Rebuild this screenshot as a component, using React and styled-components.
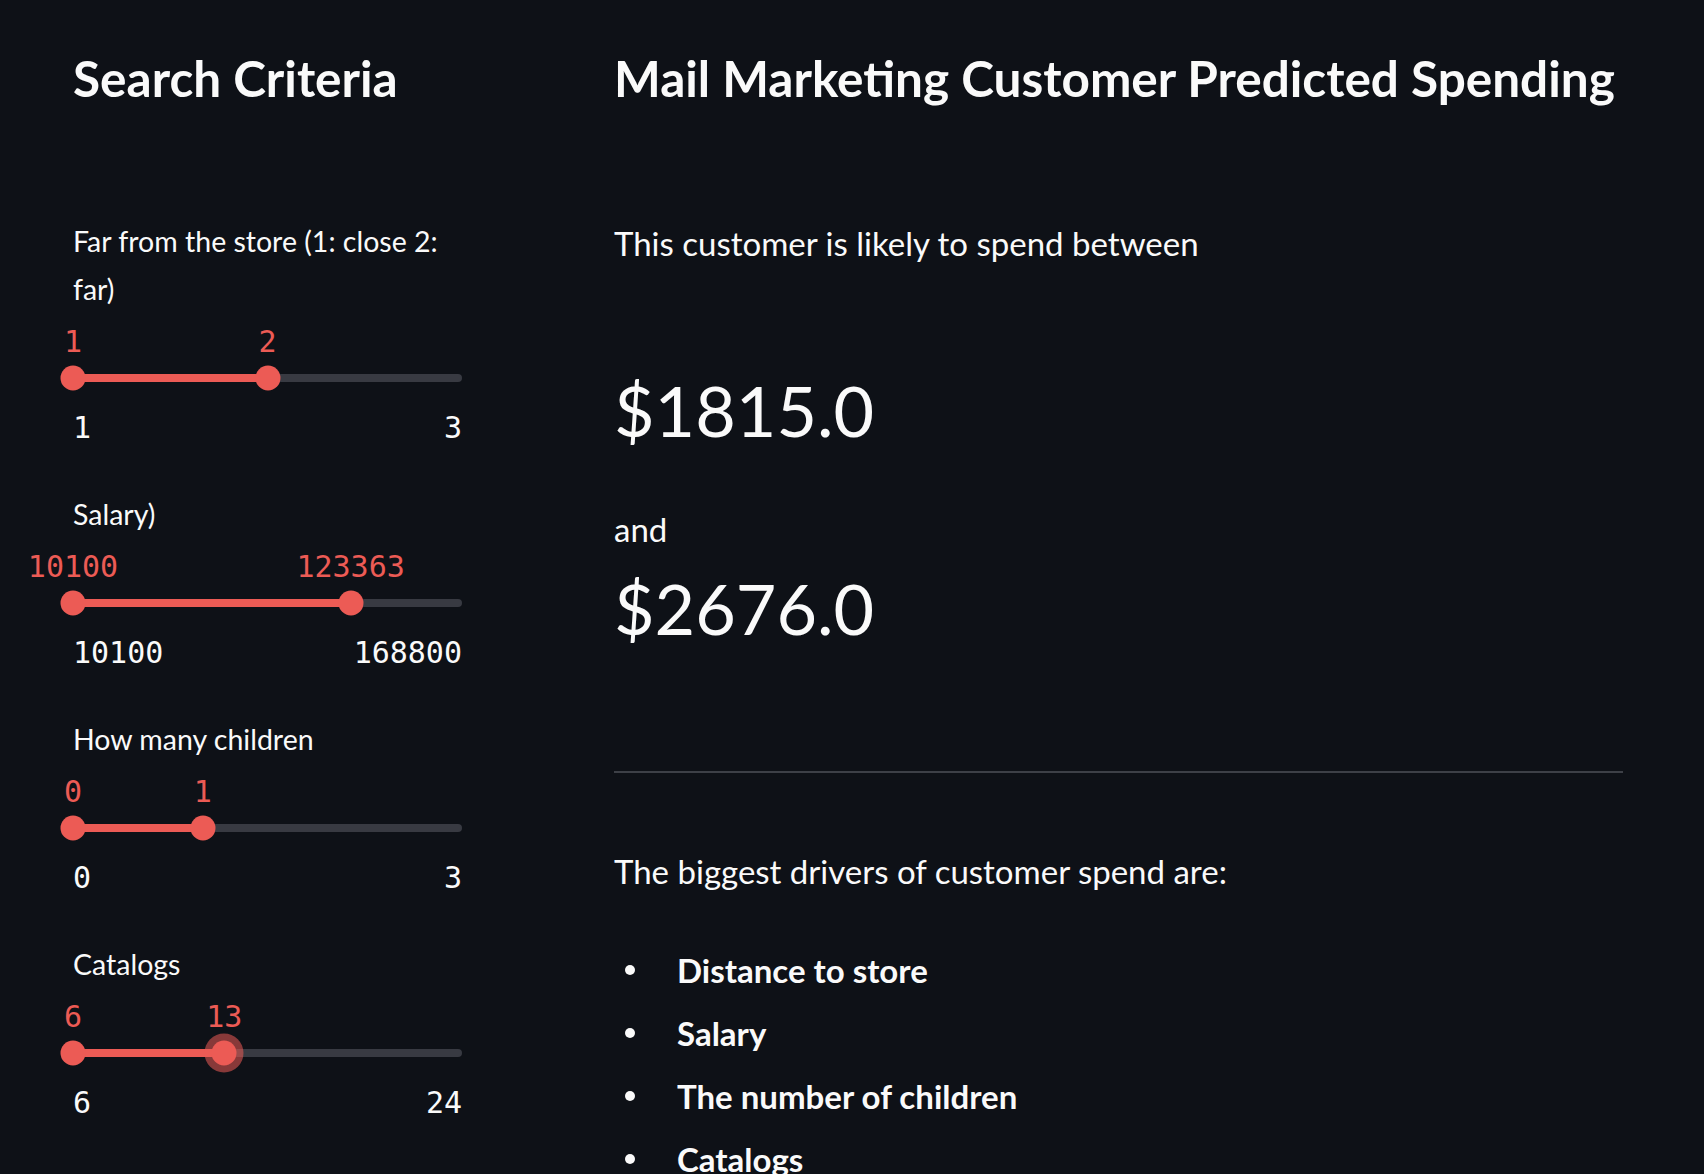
import React from 'react';
import styled, { createGlobalStyle } from 'styled-components';

const RED = '#ec5b55';

const sliders = [
  { label: 'Far from the store (1: close 2: far)', min: 1, max: 3, values: [1, 2] },
  { label: 'Salary)', min: 10100, max: 168800, values: [10100, 123363] },
  { label: 'How many children', min: 0, max: 3, values: [0, 1] },
  { label: 'Catalogs', min: 6, max: 24, values: [6, 13], focused: 1 },
];

const drivers = ['Distance to store', 'Salary', 'The number of children', 'Catalogs'];

// fraction of the track for a value
const pct = (v, min, max) => ((v - min) / (max - min)) * 100;

const RangeSlider = ({ label, min, max, values, focused }) => {
  const [lo, hi] = values.map((v) => pct(v, min, max));
  return (
    <SliderBlock>
      <Label>{label}</Label>
      <ValuesRow>
        {values.map((v, i) => (
          <ThumbValue key={i} style={{ left: `${i === 0 ? lo : hi}%` }}>
            {v}
          </ThumbValue>
        ))}
      </ValuesRow>
      <TrackBox>
        <Rail />
        <Range style={{ left: `${lo}%`, width: `${hi - lo}%` }} />
        <Thumb style={{ left: `${lo}%` }} focused={focused === 0} />
        <Thumb style={{ left: `${hi}%` }} focused={focused === 1} />
      </TrackBox>
      <Ticks>
        <span>{min}</span>
        <span>{max}</span>
      </Ticks>
    </SliderBlock>
  );
};

export default function App() {
  return (
    <>
      <GlobalStyle />
      <Page>
        <Column>
          <Title>Search Criteria</Title>
          <Criteria>
            {sliders.map((s) => (
              <RangeSlider key={s.label} {...s} />
            ))}
          </Criteria>
        </Column>
        <Column>
          <Title>Mail Marketing Customer Predicted Spending</Title>
          <Text top={111}>This customer is likely to spend between</Text>
          <Amount top={101}>$1815.0</Amount>
          <Text top={53}>and</Text>
          <Amount top={13}>$2676.0</Amount>
          <Divider />
          <Text top={74}>The biggest drivers of customer spend are:</Text>
          <Drivers>
            {drivers.map((d) => (
              <Driver key={d}>{d}</Driver>
            ))}
          </Drivers>
        </Column>
      </Page>
    </>
  );
}

const GlobalStyle = createGlobalStyle`
  html, body {
    margin: 0;
    background: #0e1117;
  }
  body {
    font-family: Lato, "Noto Sans", sans-serif;
    color: #fafafa;
  }
`;

const Page = styled.div`
  display: grid;
  grid-template-columns: 389px 1fr;
  column-gap: 152px;
  padding: 48px 81px 0 73px;
  min-height: 1174px;
  box-sizing: border-box;
  overflow: hidden;
`;

const Column = styled.div`
  display: flex;
  flex-direction: column;
  min-width: 0;
`;

const Title = styled.h1`
  margin: 0;
  font-size: 49.5px;
  line-height: 60px;
  font-weight: 700;
  white-space: nowrap;
  color: #fafafa;
`;

const Criteria = styled.div`
  margin-top: 109px;
  display: flex;
  flex-direction: column;
`;

const SliderBlock = styled.div`
  padding-bottom: 45px;
`;

const Label = styled.div`
  font-size: 28.5px;
  line-height: 48px;
`;

const ValuesRow = styled.div`
  position: relative;
  height: 58px;
`;

const ThumbValue = styled.span`
  position: absolute;
  top: 0;
  transform: translateX(-50%);
  font-family: "DejaVu Sans Mono", "Liberation Mono", monospace;
  font-size: 30px;
  line-height: 58px;
  color: ${RED};
  white-space: nowrap;
`;

const TrackBox = styled.div`
  position: relative;
  height: 14px;
`;

const Rail = styled.div`
  position: absolute;
  left: 0;
  right: 0;
  top: 3px;
  height: 8px;
  border-radius: 4px;
  background: #383a42;
`;

const Range = styled.div`
  position: absolute;
  top: 3px;
  height: 8px;
  background: ${RED};
`;

const Thumb = styled.div`
  position: absolute;
  top: 50%;
  width: 25px;
  height: 25px;
  border-radius: 50%;
  background: ${RED};
  transform: translate(-50%, -50%);
  box-shadow: ${(p) => (p.focused ? '0 0 0 7px rgba(236, 91, 85, 0.55)' : 'none')};
`;

const Ticks = styled.div`
  display: flex;
  justify-content: space-between;
  margin-top: 26px;
  font-family: "DejaVu Sans Mono", "Liberation Mono", monospace;
  font-size: 30px;
  line-height: 34px;
  color: #fafafa;
`;

const Text = styled.p`
  margin: ${(p) => p.top}px 0 0;
  font-size: 33px;
  line-height: 48px;
`;

const Amount = styled.div`
  margin-top: ${(p) => p.top}px;
  font-size: 70px;
  line-height: 84px;
  font-weight: 400;
`;

const Divider = styled.hr`
  margin: 121px 0 0;
  border: none;
  height: 2px;
  background: #3d4047;
`;

const Drivers = styled.ul`
  margin: 51px 0 0;
  padding: 0;
  list-style: none;
  display: flex;
  flex-direction: column;
  gap: 15px;
`;

const Driver = styled.li`
  display: flex;
  align-items: center;
  font-size: 33px;
  line-height: 48px;
  font-weight: 700;

  &::before {
    content: "";
    flex: none;
    width: 10px;
    height: 10px;
    border-radius: 50%;
    background: #fafafa;
    margin: 0 42px 0 11px;
  }
`;
